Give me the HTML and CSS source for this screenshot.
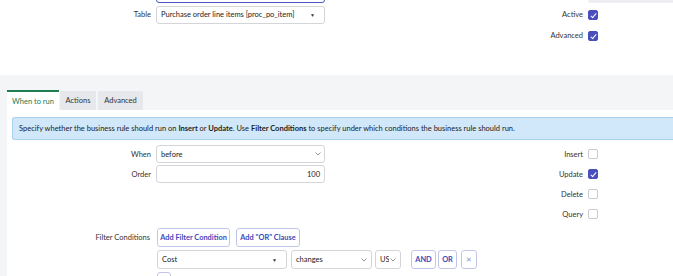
FILE: index.html
```html
<!DOCTYPE html>
<html lang="en">
<head>
  <meta charset="UTF-8" />
  <title>Business Rule</title>
  <link rel="stylesheet" href="styles.css">
</head>
<body>

<div class="top">
  <div class="row">
    <span class="label"></span>
    <div class="field focused"></div>
    <span class="rlabel"></span>
    <div class="rfield"></div>
  </div>
  <div class="row">
    <span class="label">Table</span>
    <div class="field select">Purchase order line items [proc_po_item] <span class="caret">&#9660;</span></div>
    <span class="rlabel">Active</span>
    <div class="rcell"><span class="check on"></span></div>
  </div>
  <div class="row">
    <span class="label"></span>
    <span></span>
    <span class="rlabel">Advanced</span>
    <div class="rcell"><span class="check on"></span></div>
  </div>
</div>

<div class="section">
  <div class="tabs">
    <div class="tab active">When to run</div>
    <div class="tab">Actions</div>
    <div class="tab">Advanced</div>
  </div>

  <div class="panel">
    <div class="info">
      Specify whether the business rule should run on&nbsp;<b>Insert</b>&nbsp;or&nbsp;<b>Update</b>. Use&nbsp;<b>Filter Conditions</b>&nbsp;to specify under which conditions the business rule should run.
    </div>

    <div class="row">
      <span class="label">When</span>
      <div class="field select">before <svg class="chev" width="6" height="4" viewBox="0 0 6 4"><path d="M0.5 0.5 L3 3 L5.5 0.5" fill="none" stroke="#8a8a8a" stroke-width="0.9"/></svg></div>
      <span class="rlabel">Insert</span>
      <div class="rcell"><span class="check"></span></div>
    </div>
    <div class="row">
      <span class="label">Order</span>
      <div class="field num">100</div>
      <span class="rlabel">Update</span>
      <div class="rcell"><span class="check on"></span></div>
    </div>
    <div class="row">
      <span class="label"></span>
      <span></span>
      <span class="rlabel">Delete</span>
      <div class="rcell"><span class="check"></span></div>
    </div>
    <div class="row">
      <span class="label"></span>
      <span></span>
      <span class="rlabel">Query</span>
      <div class="rcell"><span class="check"></span></div>
    </div>

    <div class="filter-row">
      <span class="label">Filter Conditions</span>
      <div class="btns">
        <button class="btn add-cond">Add Filter Condition</button>
        <button class="btn add-or">Add "OR" Clause</button>
      </div>
    </div>
    <div class="cond-row">
      <div class="sel w-cost">Cost <span class="caret">&#9660;</span></div>
      <div class="sel w-op">changes <svg class="chev" width="6" height="4" viewBox="0 0 6 4"><path d="M0.5 0.5 L3 3 L5.5 0.5" fill="none" stroke="#8a8a8a" stroke-width="0.9"/></svg></div>
      <div class="sel w-cur"><span class="cut">US</span><svg class="chev" width="6" height="4" viewBox="0 0 6 4"><path d="M0.5 0.5 L3 3 L5.5 0.5" fill="none" stroke="#8a8a8a" stroke-width="0.9"/></svg></div>
      <button class="btn and">AND</button>
      <button class="btn or">OR</button>
      <button class="btn x">&#10005;</button>
    </div>
    <div class="cond-row last">
      <button class="btn stub"></button>
    </div>
  </div>
</div>

</body>
</html>
```

FILE: styles.css
```css
* {
  box-sizing: border-box;
}

body {
  margin: 0;
  font-family: Lato, 'Open Sans', sans-serif;
  font-size: 7.5px;
  color: #2e2e2e;
  background: #fff;
  overflow: hidden;
}

.top {
  height: 92px;
  margin-top: -17px;
}

.row {
  display: grid;
  grid-template-columns: 151px 174px 1fr 90px;
  align-items: center;
  height: 21px;
}

.label {
  text-align: right;
  color: #333;
}

.rlabel {
  text-align: right;
  color: #333;
}

.field {
  height: 18px;
  border: 1px solid #d3d5d9;
  border-radius: 3px;
  background: #fff;
  padding: 0 4px;
  display: flex;
  align-items: center;
  justify-content: space-between;
  margin-left: 5px;
  color: #222;
}

.field.focused {
  border: 1px solid #4b55c4;
}

.rfield {
  height: 18px;
  background: #eceef1;
  border-radius: 3px 0 0 3px;
  margin-left: 5px;
}

.field.num {
  justify-content: flex-end;
}

.field.select {
  padding-right: 3px;
}

.caret {
  font-size: 5px;
  color: #333;
  margin-right: 6px;
}

.chev {
  display: block;
}

.rcell {
  padding-left: 5px;
  display: flex;
}

.check {
  width: 10px;
  height: 10px;
  border: 1px solid #c9cbd0;
  border-radius: 2px;
  background: #fff;
  position: relative;
}

.check.on {
  background: #4a4fbd;
  border-color: #4a4fbd;
}

.check.on::after {
  content: "";
  position: absolute;
  left: 3px;
  top: 1px;
  width: 2px;
  height: 5px;
  border: solid #fff;
  border-width: 0 1px 1px 0;
  transform: rotate(40deg);
}

.section {
  background: #f4f5f7;
  padding-top: 15px;
  height: 201px;
  overflow: hidden;
}

.tabs {
  display: flex;
  padding-left: 7px;
  height: 20px;
  align-items: flex-end;
  gap: 1px;
}

.tab {
  height: 19px;
  padding: 0 5px;
  background: #e7e8eb;
  display: flex;
  align-items: center;
  color: #333;
}

.tab.active {
  height: 20px;
  width: 52px;
  justify-content: center;
  background: #fff;
  color: #1e7a4f;
  border-top: 2px solid #1f7d52;
}

.tab:nth-child(2) {
  width: 36px;
  justify-content: center;
}

.tab:nth-child(3) {
  width: 45px;
  justify-content: center;
  margin-left: 1px;
}

.panel {
  background: #fff;
  margin-left: 7px;
  padding-top: 7px;
  height: 166px;
}

.panel .row {
  grid-template-columns: 144px 174px 1fr 90px;
  height: 20px;
}

.info {
  margin-left: 5px;
  height: 23px;
  background: #d0e8f9;
  border: 1px solid #a8d1f0;
  border-right: none;
  border-radius: 3px 0 0 3px;
  padding: 0 6px;
  display: flex;
  align-items: center;
  margin-bottom: 4px;
  color: #222;
  white-space: nowrap;
}

.info b {
  font-weight: 700;
}

.filter-row {
  display: flex;
  align-items: center;
  margin-top: 3px;
  height: 21px;
}

.filter-row .label {
  width: 144px;
  padding-right: 1px;
}

.btns {
  display: flex;
  gap: 6px;
  margin-left: 6px;
}

.btn {
  font-family: Lato, 'Open Sans', sans-serif;
  font-size: 7.4px;
  font-weight: 700;
  color: #3f48b8;
  background: #fff;
  border: 1px solid #c3c6ec;
  border-radius: 3px;
  height: 19px;
  padding: 0;
  margin: 0;
}

.add-cond { width: 73px; }
.add-or { width: 64px; }

.cond-row {
  display: flex;
  align-items: center;
  padding-left: 150px;
  margin-top: 2px;
  height: 19px;
}

.cond-row.last {
  margin-top: 3px;
}

.sel {
  height: 19px;
  border: 1px solid #d3d5d9;
  border-radius: 3px;
  padding: 0 4px;
  display: flex;
  align-items: center;
  justify-content: space-between;
  color: #222;
  white-space: nowrap;
  overflow: hidden;
  flex-shrink: 0;
}

.w-cost { width: 130px; margin-right: 4px; padding-right: 3px; }
.w-op { width: 81px; margin-right: 3px; padding-right: 4px; }
.w-cur { width: 26px; padding: 0 4px 0 4px; margin-right: 10px; }

.cut {
  width: 9px;
  overflow: hidden;
}

.btn.and { width: 25px; margin-right: 2px; }
.btn.or { width: 19px; margin-right: 4px; }

.btn.x {
  font-weight: 400;
  color: #8d92d4;
  width: 16px;
}

.btn.stub {
  width: 14px;
}
```
